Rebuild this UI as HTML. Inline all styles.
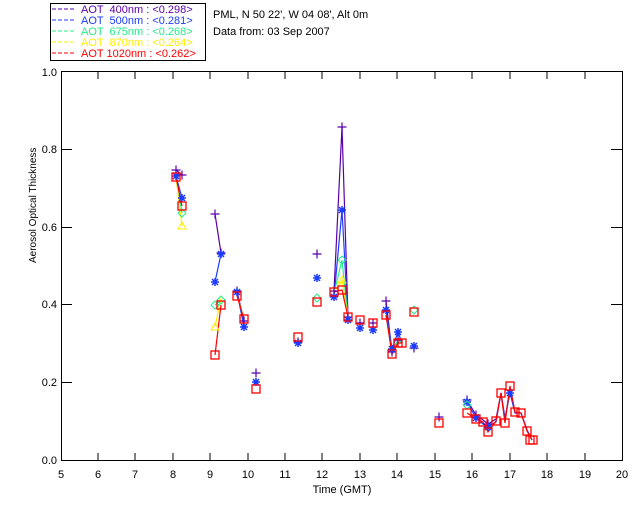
<!DOCTYPE html>
<html><head><meta charset="utf-8"><style>
body{margin:0;background:#fff;width:640px;height:512px;overflow:hidden}
svg text{font-family:"Liberation Sans",sans-serif;font-size:11px}
</style></head><body>
<svg width="640" height="512" viewBox="0 0 640 512" xmlns="http://www.w3.org/2000/svg">
<defs>
<g id="mp"><path d="M-4.5 0H4.5M0 -4.5V4.5" stroke="#5a00aa" stroke-width="1.2" fill="none"/></g>
<g id="mb"><path d="M-4 0H4M0 -4V4M-3 -3L3 3M-3 3L3 -3" stroke="#1a3cff" stroke-width="1.5" fill="none"/></g>
<g id="mg"><path d="M0 -4L4 0L0 4L-4 0Z" stroke="#22ee88" stroke-width="1" fill="none"/></g>
<g id="my"><path d="M0 -4L4 3H-4Z" stroke="#ffee00" stroke-width="1" fill="none"/></g>
<g id="mr"><rect x="-4" y="-4" width="8" height="8" stroke="#ff0000" stroke-width="1.3" fill="none"/></g>
</defs>
<rect x="0" y="0" width="640" height="512" fill="#fff"/>
<rect x="50.5" y="3.5" width="155" height="57" fill="none" stroke="#000"/>
<g stroke-width="1" stroke-dasharray="4,2">
<line x1="52" y1="9" x2="74" y2="9" stroke="#5a00aa"/>
<line x1="52" y1="20" x2="74" y2="20" stroke="#1a3cff"/>
<line x1="52" y1="31" x2="74" y2="31" stroke="#22ee88"/>
<line x1="52" y1="42" x2="74" y2="42" stroke="#ffee00"/>
<line x1="52" y1="53" x2="74" y2="53" stroke="#ff0000"/>
</g>
<text x="81" y="13" fill="#5a00aa" xml:space="preserve">AOT  400nm : &lt;0.298&gt;</text>
<text x="81" y="24" fill="#1a3cff" xml:space="preserve">AOT  500nm : &lt;0.281&gt;</text>
<text x="81" y="35" fill="#22ee88" xml:space="preserve">AOT  675nm : &lt;0.268&gt;</text>
<text x="81" y="46" fill="#ffee00" xml:space="preserve">AOT  870nm : &lt;0.264&gt;</text>
<text x="81" y="57" fill="#ff0000" xml:space="preserve">AOT 1020nm : &lt;0.262&gt;</text>
<text x="213" y="18" fill="#000">PML, N 50 22', W 04 08', Alt 0m</text>
<text x="213" y="35" fill="#000">Data from: 03 Sep 2007</text>
<rect x="61.5" y="71.5" width="561" height="389" fill="none" stroke="#000"/>
<g stroke="#000">
<path d="M98 461v-8M135 461v-8M173 461v-8M210 461v-8M248 461v-8M285 461v-8M322 461v-8M360 461v-8M397 461v-8M435 461v-8M472 461v-8M510 461v-8M547 461v-8M585 461v-8"/>
<path d="M98 71v8M135 71v8M173 71v8M210 71v8M248 71v8M285 71v8M322 71v8M360 71v8M397 71v8M435 71v8M472 71v8M510 71v8M547 71v8M585 71v8"/>
<path d="M61 149.5h11M61 227.5h11M61 304.5h11M61 382.5h11M622 149.5h-11M622 227.5h-11M622 304.5h-11M622 382.5h-11"/>
</g>
<g fill="#000" text-anchor="middle">
<text x="61" y="478">5</text><text x="98" y="478">6</text><text x="135" y="478">7</text><text x="173" y="478">8</text><text x="210" y="478">9</text><text x="248" y="478">10</text><text x="285" y="478">11</text><text x="322" y="478">12</text><text x="360" y="478">13</text><text x="397" y="478">14</text><text x="435" y="478">15</text><text x="472" y="478">16</text><text x="510" y="478">17</text><text x="547" y="478">18</text><text x="585" y="478">19</text><text x="622" y="478">20</text>
<text x="342" y="493">Time (GMT)</text>
</g>
<g fill="#000" text-anchor="end">
<text x="57" y="76">1.0</text><text x="57" y="153">0.8</text><text x="57" y="231">0.6</text><text x="57" y="308">0.4</text><text x="57" y="386">0.2</text><text x="57" y="464">0.0</text>
</g>
<text transform="translate(36,263) rotate(-90)" fill="#000" style="font-size:10px">Aerosol Optical Thickness</text>
<g fill="none" stroke-width="1.2">
<g stroke="#5a00aa">
<polyline points="176,170 182,175"/><polyline points="215,214 221,253"/><polyline points="237,291 244,321"/>
<polyline points="334,291 342,127 348,317"/><polyline points="386,301 392,352 398,340 402,343"/>
<polyline points="467,400 476,415 483,420 488,424 496,419 501,393 505,420 510,388 515,412 521,413 527,430 532,440"/>
</g>
<g stroke="#1a3cff">
<polyline points="176,176 182,198"/><polyline points="215,282 221,254"/><polyline points="237,292 244,327"/>
<polyline points="334,297 342,210 348,320"/><polyline points="386,310 392,349 398,332 402,343"/>
<polyline points="467,402 476,418 483,424 488,427 496,422 501,393 505,418 510,393 515,413 521,413 527,430 532,440"/>
</g>
<g stroke="#22ee88">
<polyline points="176,178 182,213"/><polyline points="215,305 221,300"/><polyline points="237,296 244,318"/>
<polyline points="334,293 342,260 348,318"/><polyline points="386,315 392,354 398,340 402,343"/>
</g>
<g stroke="#ffee00">
<polyline points="176,177 182,226"/><polyline points="215,327 221,298"/><polyline points="237,296 244,318"/>
<polyline points="334,292 342,280 348,318"/>
</g>
<g stroke="#ff0000">
<polyline points="176,177 182,206"/><polyline points="215,355 221,305"/><polyline points="237,296 244,319"/>
<polyline points="334,292 342,290 348,317"/><polyline points="386,315 392,354 398,343 402,343"/>
<polyline points="467,413 476,419 483,422 488,432 496,421 501,393 505,423 510,386 515,412 521,413 527,431 532,440"/>
</g>
</g>
<g>
<use href="#mp" x="176" y="170"/><use href="#mp" x="182" y="175"/><use href="#mp" x="215" y="214"/><use href="#mp" x="221" y="253"/><use href="#mp" x="237" y="291"/><use href="#mp" x="244" y="321"/><use href="#mp" x="256" y="373"/><use href="#mp" x="298" y="342"/><use href="#mp" x="317" y="254"/><use href="#mp" x="334" y="291"/><use href="#mp" x="342" y="127"/><use href="#mp" x="348" y="317"/><use href="#mp" x="360" y="323"/><use href="#mp" x="373" y="323"/><use href="#mp" x="386" y="301"/><use href="#mp" x="392" y="352"/><use href="#mp" x="398" y="340"/><use href="#mp" x="414" y="348"/><use href="#mp" x="439" y="417"/><use href="#mp" x="467" y="400"/><use href="#mp" x="476" y="415"/><use href="#mp" x="488" y="424"/>
<use href="#mb" x="176" y="176"/><use href="#mb" x="182" y="198"/><use href="#mb" x="215" y="282"/><use href="#mb" x="221" y="254"/><use href="#mb" x="237" y="292"/><use href="#mb" x="244" y="327"/><use href="#mb" x="256" y="382"/><use href="#mb" x="298" y="343"/><use href="#mb" x="317" y="278"/><use href="#mb" x="334" y="297"/><use href="#mb" x="342" y="210"/><use href="#mb" x="348" y="320"/><use href="#mb" x="360" y="328"/><use href="#mb" x="373" y="330"/><use href="#mb" x="386" y="310"/><use href="#mb" x="392" y="349"/><use href="#mb" x="398" y="332"/><use href="#mb" x="414" y="346"/><use href="#mb" x="467" y="402"/><use href="#mb" x="476" y="418"/><use href="#mb" x="488" y="427"/><use href="#mb" x="510" y="393"/>
<use href="#mg" x="182" y="213"/><use href="#mg" x="215" y="305"/><use href="#mg" x="221" y="300"/><use href="#mg" x="342" y="260"/><use href="#mg" x="317" y="298"/><use href="#mg" x="467" y="405"/><use href="#mg" x="414" y="310"/>
<use href="#my" x="182" y="226"/><use href="#my" x="215" y="327"/><use href="#my" x="342" y="280"/>
<use href="#mr" x="176" y="177"/><use href="#mr" x="182" y="206"/><use href="#mr" x="215" y="355"/><use href="#mr" x="221" y="305"/><use href="#mr" x="237" y="296"/><use href="#mr" x="244" y="319"/><use href="#mr" x="256" y="389"/><use href="#mr" x="298" y="337"/><use href="#mr" x="317" y="302"/><use href="#mr" x="334" y="292"/><use href="#mr" x="342" y="290"/><use href="#mr" x="348" y="317"/><use href="#mr" x="360" y="320"/><use href="#mr" x="373" y="323"/><use href="#mr" x="386" y="315"/><use href="#mr" x="392" y="354"/><use href="#mr" x="398" y="343"/><use href="#mr" x="402" y="343"/><use href="#mr" x="414" y="312"/><use href="#mr" x="439" y="423"/><use href="#mr" x="467" y="413"/><use href="#mr" x="476" y="419"/><use href="#mr" x="483" y="422"/><use href="#mr" x="488" y="432"/><use href="#mr" x="496" y="421"/><use href="#mr" x="501" y="393"/><use href="#mr" x="505" y="423"/><use href="#mr" x="510" y="386"/><use href="#mr" x="515" y="412"/><use href="#mr" x="521" y="413"/><use href="#mr" x="527" y="431"/><use href="#mr" x="530" y="440"/><use href="#mr" x="533" y="440"/>
</g>
</svg>
</body></html>
